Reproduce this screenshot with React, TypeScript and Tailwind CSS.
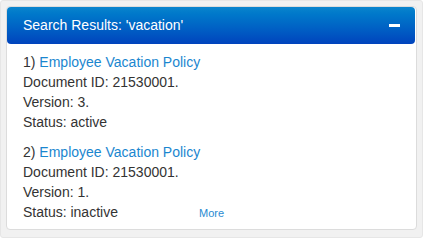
import React from "react";

interface Result {
  id: number;
  title: string;
  docId: string;
  version: string;
  status: string;
}

const RESULTS: Result[] = [
  { id: 1, title: "Employee Vacation Policy", docId: "21530001", version: "3", status: "active" },
  { id: 2, title: "Employee Vacation Policy", docId: "21530001", version: "1", status: "inactive" },
];

const App = () => {
  return (
    <div
      className="w-[423px] h-[238px] bg-[#f1f1f1] border border-[#e6e6e6] rounded-[3px] pt-[5px] px-[5px] pb-[8px] text-[#333]"
      style={{ fontFamily: "'Liberation Sans', Arial, sans-serif" }}
    >
      <div className="h-[224px] bg-white border border-[#dcdcdc] rounded-[4px] flex flex-col">
        {/* Header */}
        <div className="h-[37px] mr-px rounded-[4px] bg-gradient-to-b from-[#0a84cd] to-[#0043bd] flex items-center justify-between pl-[16px] pr-[15px]">
          <span className="text-white text-[14px]">Search Results: 'vacation'</span>
          <span className="w-[11px] h-[3px] bg-white" />
        </div>

        {/* Results */}
        <div className="pt-[8px] px-[16px] flex flex-col gap-[10px] text-[14px] leading-[20px]">
          {RESULTS.map((r, idx) => (
            <div key={r.id}>
              <div>
                {r.id}) <a className="text-[#1a86cf]">{r.title}</a>
              </div>
              <div>Document ID: {r.docId}.</div>
              <div>Version: {r.version}.</div>
              {idx === RESULTS.length - 1 ? (
                <div className="grid grid-cols-[1fr_auto_1fr] items-baseline">
                  <span>Status: {r.status}</span>
                  <a className="text-[#2a8bd2] text-[11px]">More</a>
                  <span />
                </div>
              ) : (
                <div>Status: {r.status}</div>
              )}
            </div>
          ))}
        </div>
      </div>
    </div>
  );
};

export default App;
